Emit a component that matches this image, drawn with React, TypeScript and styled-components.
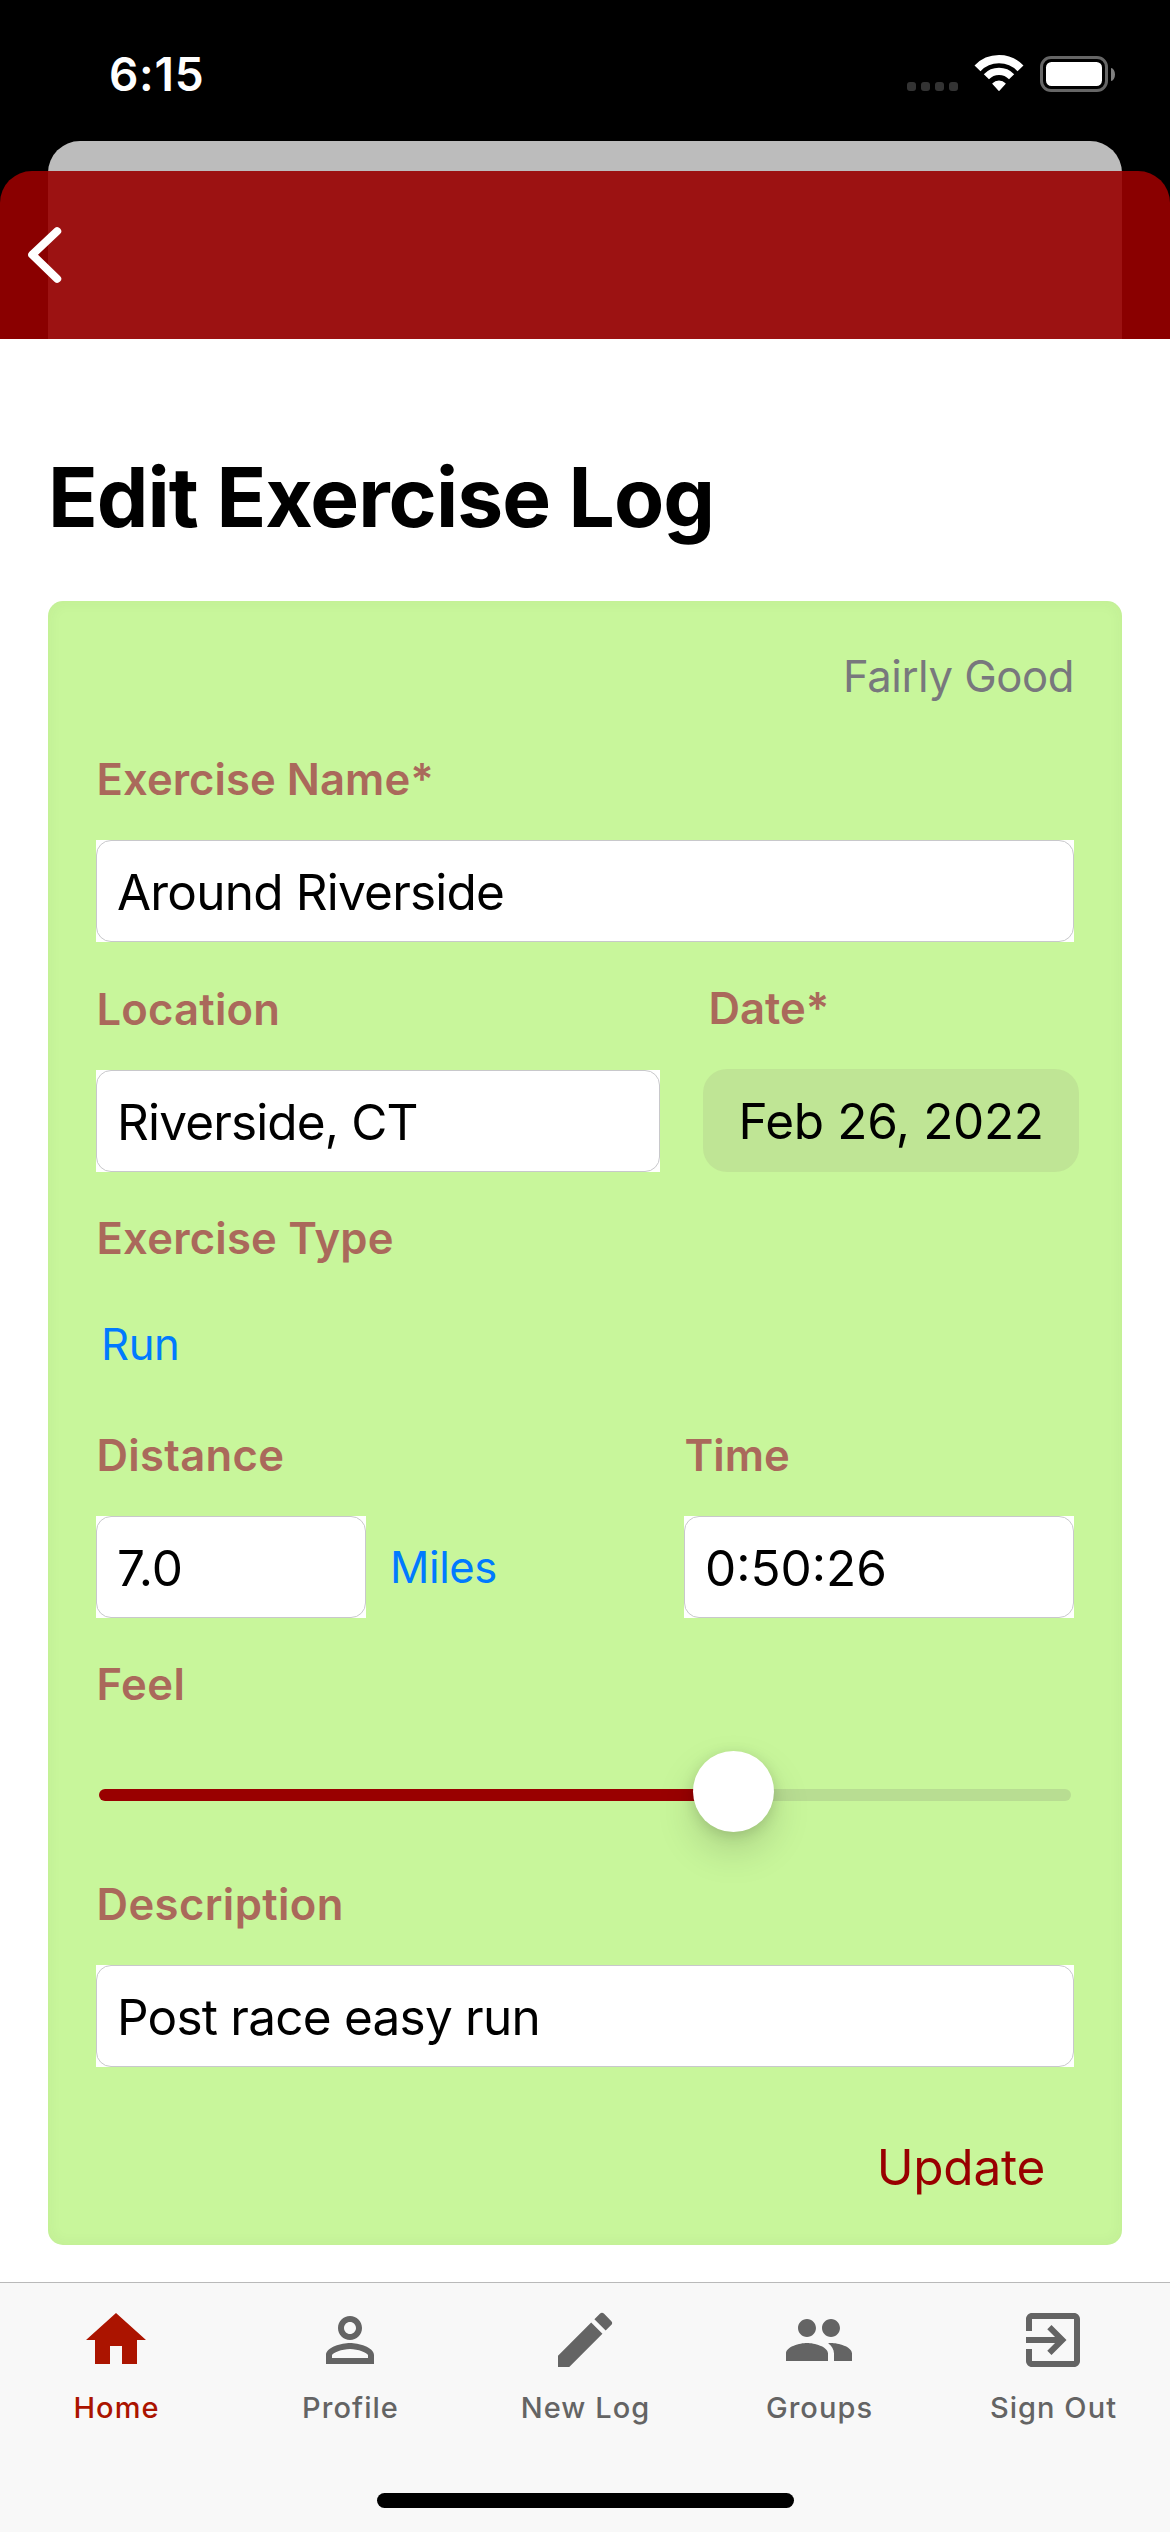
import React from "react";
import styled, { createGlobalStyle } from "styled-components";

const GlobalStyle = createGlobalStyle`
  *, *::before, *::after { box-sizing: border-box; }
  html, body { margin: 0; padding: 0; background: #000; }
  body {
    font-family: Inter, "Liberation Sans", sans-serif;
    -webkit-font-smoothing: antialiased;
  }
`;

const Screen = styled.div`
  display: flex;
  flex-direction: column;
  width: 1170px;
  height: 2532px;
  background: #000;
  overflow: hidden;
`;

/* ---------- status bar ---------- */

const StatusBar = styled.header`
  display: flex;
  justify-content: space-between;
  align-items: flex-start;
  flex: none;
  height: 141px;
  padding: 44px 55px 0 109px;
`;

const Clock = styled.span`
  color: #fff;
  font-size: 46px;
  font-weight: 600;
  line-height: 60px;
  letter-spacing: 0.7px;
`;

const StatusIcons = styled.div`
  display: flex;
  align-items: flex-start;
  height: 37px;
  margin-top: 11px;
`;

const SignalDots = styled.div`
  display: flex;
  gap: 5px;
  margin: 27px 16px 0 0;
`;

const SignalDot = styled.span`
  width: 9px;
  height: 9px;
  border-radius: 3px;
  background: #333;
`;

const WifiIcon = styled.svg`
  display: block;
  width: 50px;
  height: 37px;
  margin-right: 16px;
`;

const Battery = styled.div`
  display: flex;
  align-items: center;
  gap: 3px;
  height: 36px;
  margin-top: 1px;
`;

const BatteryShell = styled.div`
  width: 68px;
  height: 36px;
  padding: 3px;
  border: 3px solid #666;
  border-radius: 11px;
`;

const BatteryCharge = styled.div`
  height: 24px;
  border-radius: 5.5px;
  background: #fff;
`;

const BatteryCap = styled.div`
  width: 4px;
  height: 13px;
  border-radius: 0 4px 4px 0 / 0 6.5px 6.5px 0;
  background: #808080;
`;

/* ---------- stacked sheets ---------- */

const BackSheet = styled.div`
  flex: none;
  height: 198px;
  margin: 0 48px;
  border-radius: 32px 32px 0 0;
  background: #bcbcbc;
`;

const NavBar = styled.nav`
  position: relative;
  display: flex;
  align-items: center;
  flex: none;
  height: 168px;
  margin-top: -168px;
  padding-left: 25px;
  border-radius: 32px 32px 0 0;
  background: rgba(152, 0, 0, 0.905);
`;

const BackButton = styled.button`
  display: flex;
  padding: 0;
  border: 0;
  background: none;
`;

const BackIcon = styled.svg`
  display: block;
  width: 40px;
  height: 60px;
`;

/* ---------- page ---------- */

const Page = styled.main`
  display: flex;
  flex-direction: column;
  flex: 1;
  background: #fff;
  padding: 109px 48px 0;
`;

const Title = styled.h1`
  margin: 0 0 53px;
  color: #000;
  font-size: 82px;
  font-weight: 700;
  line-height: 100px;
  letter-spacing: -0.95px;
  white-space: nowrap;
`;

const Card = styled.section`
  display: flex;
  flex-direction: column;
  height: 1644px;
  padding: 48px 48px 0;
  border-radius: 15px;
  background: #c8f69b;
  box-shadow: inset 0 0 15px rgba(60, 60, 30, 0.05);
`;

const FeelCaption = styled.p`
  margin: 0;
  color: #78787d;
  font-size: 43.6px;
  line-height: 56px;
  letter-spacing: -0.45px;
  text-align: right;
`;

const FieldRow = styled.div<{ $top?: number }>`
  display: flex;
  justify-content: space-between;
  align-items: flex-end;
  margin-top: ${(p) => p.$top ?? 40}px;
`;

const Field = styled.div<{ $width?: number; $outset?: number }>`
  display: flex;
  flex-direction: column;
  gap: 32px;
  width: ${(p) => (p.$width ? `${p.$width}px` : "100%")};
  margin-right: ${(p) => -(p.$outset ?? 0)}px;
`;

const Label = styled.label<{ $indent?: number; $track?: number }>`
  padding-left: ${(p) => p.$indent ?? 0.5}px;
  color: #aa695b;
  font-size: 43.6px;
  font-weight: 600;
  line-height: 56px;
  letter-spacing: ${(p) => p.$track ?? 0.2}px;
  white-space: nowrap;
`;

const InputFrame = styled.div`
  flex: 1;
  background: #fff;
`;

const InputBox = styled.div<{ $track?: number }>`
  height: 102px;
  padding: 2px 20px 0;
  border: 1px solid #c8c8cb;
  border-radius: 15px;
  color: #000;
  font-size: 49.5px;
  line-height: 98px;
  letter-spacing: ${(p) => p.$track ?? 0}px;
  white-space: nowrap;
`;

const DatePicker = styled.button`
  height: 103px;
  padding: 1px 0 0;
  border: 0;
  border-radius: 24px;
  background: #bfe595;
  color: #000;
  font: 400 49.5px/100px Inter, "Liberation Sans", sans-serif;
  letter-spacing: -0.37px;
  text-align: center;
`;

const PickerLink = styled.button`
  align-self: flex-start;
  padding: 0;
  border: 0;
  background: none;
  color: #007aff;
  font: 400 43.6px/56px Inter, "Liberation Sans", sans-serif;
  letter-spacing: -0.4px;
`;

const TypeField = styled.div`
  display: flex;
  flex-direction: column;
  gap: 50px;
  margin-top: 39px;

  ${PickerLink} { margin-left: 5px; }
`;

const DistanceField = styled.div`
  display: flex;
  align-items: flex-end;
  gap: 24px;

  ${PickerLink} {
    align-self: flex-end;
    margin-bottom: 22px;
  }
`;

/* ---------- slider ---------- */

const FeelField = styled.div`
  margin-top: 39px;
  display: flex;
  flex-direction: column;
`;

const Slider = styled.div`
  display: flex;
  align-items: center;
  height: 81px;
  margin: 38px 3px 0;
`;

const TrackFilled = styled.div`
  width: 614px;
  height: 12px;
  margin: 7px -20px 0 0;
  border-radius: 6px;
  background: #900;
`;

const TrackRest = styled.div`
  flex: 1;
  height: 12px;
  margin: 7px 0 0 -20px;
  border-radius: 6px;
  background: #b8dd92;
`;

const Knob = styled.div`
  position: relative;
  flex: none;
  width: 81px;
  height: 81px;
  border-radius: 50%;
  background: #fff;
  box-shadow: 0 18px 39px rgba(0, 0, 0, 0.15), 0 3px 14px rgba(0, 0, 0, 0.13);
`;

const UpdateButton = styled.button`
  align-self: flex-end;
  margin: 70px 29px 0 0;
  padding: 0;
  border: 0;
  background: none;
  color: #900;
  font: 400 49.5px/60px Inter, "Liberation Sans", sans-serif;
  letter-spacing: -0.25px;
`;

/* ---------- tab bar ---------- */

const TabBar = styled.footer`
  display: flex;
  flex-direction: column;
  justify-content: space-between;
  align-items: center;
  flex: none;
  height: 250px;
  padding: 21px 0 24px;
  border-top: 1px solid #b9b9b9;
  background: #f8f8f8;
`;

const Tabs = styled.div`
  display: grid;
  grid-template-columns: 232px 236px 234px 234px 234px;
`;

const Tab = styled.div<{ $active?: boolean }>`
  display: flex;
  flex-direction: column;
  align-items: center;
  gap: 13px;
  color: ${(p) => (p.$active ? "#ab1400" : "#646464")};
`;

const TabIcon = styled.svg`
  display: block;
  width: 72px;
  height: 72px;
  fill: currentColor;
`;

const TabLabel = styled.span`
  padding-left: 1px;
  font-size: 29px;
  font-weight: 500;
  line-height: 38px;
  letter-spacing: 1.05px;
  white-space: nowrap;
`;

const HomeIndicator = styled.div`
  width: 417px;
  height: 15px;
  border-radius: 8px;
  background: #000;
`;

interface TextInputProps {
  value: string;
  track?: number;
}

const TextInput = ({ value, track }: TextInputProps) => (
  <InputFrame>
    <InputBox $track={track}>{value}</InputBox>
  </InputFrame>
);

const DistanceInput = styled.div`
  display: flex;
  width: 270px;
`;

const tabs = [
  { label: "Home", path: "M10 20v-6h4v6h5v-8h3L12 3 2 12h3v8z" },
  {
    label: "Profile",
    path: "M12 6c1.1 0 2 .9 2 2s-.9 2-2 2-2-.9-2-2 .9-2 2-2m0 9c2.7 0 5.8 1.29 6 2v1H6v-.99c.2-.72 3.3-2.01 6-2.01m0-11C9.79 4 8 5.79 8 8s1.79 4 4 4 4-1.79 4-4-1.79-4-4-4zm0 9c-2.67 0-8 1.34-8 4v3h16v-3c0-2.66-5.33-4-8-4z",
  },
  {
    label: "New Log",
    path: "M3 17.25V21h3.75L17.81 9.94l-3.75-3.75L3 17.25zM20.71 7.04a.996.996 0 0 0 0-1.41l-2.34-2.34a.996.996 0 0 0-1.41 0l-1.83 1.83 3.75 3.75 1.83-1.83z",
  },
  {
    label: "Groups",
    path: "M16 11c1.66 0 2.99-1.34 2.99-3S17.66 5 16 5c-1.66 0-3 1.34-3 3s1.34 3 3 3zm-8 0c1.66 0 2.99-1.34 2.99-3S9.66 5 8 5C6.34 5 5 6.34 5 8s1.34 3 3 3zm0 2c-2.33 0-7 1.17-7 3.5V19h14v-2.5c0-2.33-4.67-3.5-7-3.5zm8 0c-.29 0-.62.02-.97.05 1.16.84 1.97 1.97 1.97 3.45V19h6v-2.5c0-2.33-4.67-3.5-7-3.5z",
  },
  {
    label: "Sign Out",
    path: "M10.09 15.59L11.5 17l5-5-5-5-1.41 1.41L12.67 11H3v2h9.67l-2.58 2.59zM19 3H5c-1.11 0-2 .9-2 2v4h2V5h14v14H5v-4H3v4c0 1.1.89 2 2 2h14c1.1 0 2-.9 2-2V5c0-1.1-.9-2-2-2z",
  },
];

export default function App() {
  return (
    <Screen>
      <GlobalStyle />
      <StatusBar>
        <Clock>6:15</Clock>
        <StatusIcons>
          <SignalDots>
            <SignalDot />
            <SignalDot />
            <SignalDot />
            <SignalDot />
          </SignalDots>
          <WifiIcon viewBox="0 0 50 37" fill="none" stroke="#fff">
            <path d="M3.5 13.3A29.85 29.85 0 0 1 46.5 13.3" strokeWidth="8.3" />
            <path d="M12.4 21.8A17.5 17.5 0 0 1 37.6 21.8" strokeWidth="7.2" />
            <path
              d="M25 35.3L18.9 28.7A8.4 8.4 0 0 1 31.1 28.7Z"
              fill="#fff"
              strokeWidth="1.2"
              strokeLinejoin="round"
            />
          </WifiIcon>
          <Battery>
            <BatteryShell>
              <BatteryCharge />
            </BatteryShell>
            <BatteryCap />
          </Battery>
        </StatusIcons>
      </StatusBar>

      <BackSheet />
      <NavBar>
        <BackButton aria-label="Back">
          <BackIcon viewBox="0 0 40 60" fill="none" stroke="#fff">
            <path
              d="M32.2 6.2L7.2 29.7L32.2 53.8"
              strokeWidth="8"
              strokeLinecap="round"
              strokeLinejoin="round"
            />
          </BackIcon>
        </BackButton>
      </NavBar>

      <Page>
        <Title>Edit Exercise Log</Title>
        <Card>
          <FeelCaption>Fairly Good</FeelCaption>

          <FieldRow $top={47}>
            <Field>
              <Label $track={0.05}>Exercise Name*</Label>
              <TextInput value="Around Riverside" track={-0.8} />
            </Field>
          </FieldRow>

          <FieldRow $top={39}>
            <Field $width={564}>
              <Label>Location</Label>
              <TextInput value="Riverside, CT" track={-0.85} />
            </Field>
            <Field $width={376} $outset={5}>
              <Label $indent={5.5} $track={0}>Date*</Label>
              <DatePicker>Feb 26, 2022</DatePicker>
            </Field>
          </FieldRow>

          <TypeField>
            <Label>Exercise Type</Label>
            <PickerLink>Run</PickerLink>
          </TypeField>

          <FieldRow $top={55}>
            <Field $width={420}>
              <Label $track={0.3}>Distance</Label>
              <DistanceField>
                <DistanceInput>
                  <TextInput value="7.0" />
                </DistanceInput>
                <PickerLink>Miles</PickerLink>
              </DistanceField>
            </Field>
            <Field $width={390}>
              <Label $track={0}>Time</Label>
              <TextInput value="0:50:26" />
            </Field>
          </FieldRow>

          <FeelField>
            <Label $track={0.4}>Feel</Label>
            <Slider>
              <TrackFilled />
              <Knob />
              <TrackRest />
            </Slider>
          </FeelField>

          <FieldRow $top={45}>
            <Field>
              <Label $track={0.4}>Description</Label>
              <TextInput value="Post race easy run" track={-0.78} />
            </Field>
          </FieldRow>

          <UpdateButton>Update</UpdateButton>
        </Card>
      </Page>

      <TabBar>
        <Tabs>
          {tabs.map((tab, i) => (
            <Tab key={tab.label} $active={i === 0}>
              <TabIcon viewBox="0 0 24 24">
                <path d={tab.path} />
              </TabIcon>
              <TabLabel>{tab.label}</TabLabel>
            </Tab>
          ))}
        </Tabs>
        <HomeIndicator />
      </TabBar>
    </Screen>
  );
}
